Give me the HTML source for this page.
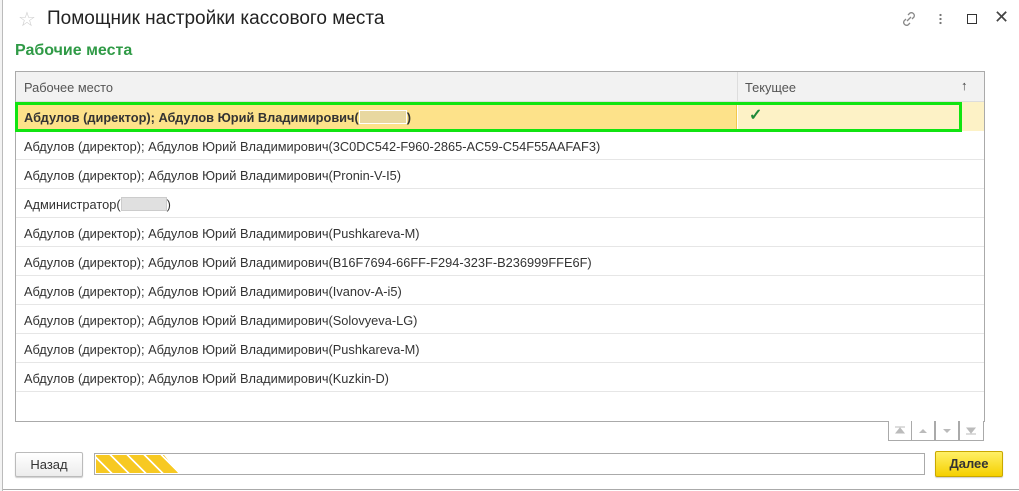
<!DOCTYPE html>
<html><head><meta charset="utf-8"><style>
*{box-sizing:border-box;margin:0;padding:0}
body{width:1019px;height:491px;background:#fff;font-family:"Liberation Sans",Arial,sans-serif;position:relative;overflow:hidden;color:#333}
.abs{position:absolute}
.row{position:absolute;left:16px;width:968px;height:29px;border-bottom:1px solid #e6e6e6;font-size:12.8px;line-height:31px;padding-left:8px;color:#333;white-space:nowrap}
.blur{display:inline-block;width:46px;height:14px;background:#e0e0e0;border:1px solid #ccc;vertical-align:-2px}
.nb{position:absolute;top:421px;width:24px;height:20px;border:1px solid #aaa;border-top:none;background:#fff}
</style></head><body>
<div class="abs" style="left:0;top:0;width:3px;height:491px;background:#f3f3f3;border-right:1px solid #bbb"></div>
<div class="abs" style="left:3px;top:489px;width:1016px;height:1px;background:#aaa"></div>
<div class="abs" style="left:18px;top:7px;font-size:20px;color:#ccc">☆</div>
<div class="abs" style="left:47px;top:8px;font-size:19px;color:#222">Помощник настройки кассового места</div>
<svg class="abs" style="left:900px;top:10px" width="18" height="18" viewBox="0 0 18 18"><g fill="none" stroke="#888" stroke-width="1.3"><path d="M8 5l2-2a3 3 0 0 1 4 4l-2 2"/><path d="M10 13l-2 2a3 3 0 0 1-4-4l2-2"/><path d="M7 11l4-4"/></g></svg>
<div class="abs" style="left:939px;top:13px;width:3px;height:12px;background:radial-gradient(circle,#777 1px,transparent 1.3px) 0 0/3px 4px"></div>
<div class="abs" style="left:967px;top:14px;width:10px;height:10px;border:1.5px solid #333"></div>
<div class="abs" style="left:994px;top:7px;font-size:18px;color:#444">✕</div>
<div class="abs" style="left:15px;top:42px;font-size:16px;font-weight:bold;color:#2f9a46">Рабочие места</div>
<div class="abs" style="left:15px;top:71px;width:970px;height:351px;border:1px solid #aaa"></div>
<div class="abs" style="left:16px;top:72px;width:968px;height:30px;background:#f2f2f2;border-bottom:1px solid #ddd"></div>
<div class="abs" style="left:737px;top:72px;width:1px;height:30px;background:#ddd"></div>
<div class="abs" style="left:24px;top:80px;font-size:12.8px;color:#555">Рабочее место</div>
<div class="abs" style="left:745px;top:80px;font-size:12.8px;color:#555">Текущее</div>
<div class="abs" style="left:961px;top:78px;font-size:13px;color:#444">↑</div>
<div class="abs" style="left:16px;top:102px;width:721px;height:29px;background:#fde28a;border-right:1px solid #f2c94c"></div>
<div class="abs" style="left:738px;top:102px;width:246px;height:29px;background:#fdf2c6"></div>
<div class="abs" style="left:15px;top:102px;width:947px;height:30px;border:3px solid #11e411"></div>
<div class="abs" style="left:24px;top:110px;font-size:12.8px;font-weight:bold;color:#333">Абдулов (директор); Абдулов Юрий Владимирович(<span class="blur" style="width:48px;background:#e8d8a0;border-color:#fff"></span>)</div>
<div class="abs" style="left:749px;top:105px;font-size:16px;color:#1f8a3a;font-weight:bold">✓</div>
<div class="row" style="top:131px">Абдулов (директор); Абдулов Юрий Владимирович(3C0DC542-F960-2865-AC59-C54F55AAFAF3)</div>
<div class="row" style="top:160px">Абдулов (директор); Абдулов Юрий Владимирович(Pronin-V-I5)</div>
<div class="row" style="top:189px">Администратор(<span class="blur"></span>)</div>
<div class="row" style="top:218px">Абдулов (директор); Абдулов Юрий Владимирович(Pushkareva-M)</div>
<div class="row" style="top:247px">Абдулов (директор); Абдулов Юрий Владимирович(B16F7694-66FF-F294-323F-B236999FFE6F)</div>
<div class="row" style="top:276px">Абдулов (директор); Абдулов Юрий Владимирович(Ivanov-A-i5)</div>
<div class="row" style="top:305px">Абдулов (директор); Абдулов Юрий Владимирович(Solovyeva-LG)</div>
<div class="row" style="top:334px">Абдулов (директор); Абдулов Юрий Владимирович(Pushkareva-M)</div>
<div class="row" style="top:363px">Абдулов (директор); Абдулов Юрий Владимирович(Kuzkin-D)</div>
<div class="nb" style="left:888px"><svg width="22" height="19"><path d="M6 6h10M7 12l4-5 4 5z" stroke="#bbb" fill="#bbb"/></svg></div>
<div class="nb" style="left:911px"><svg width="22" height="19"><path d="M7 12l4-4 4 4z" fill="#bbb"/></svg></div>
<div class="nb" style="left:935px"><svg width="22" height="19"><path d="M7 8l4 4 4-4z" fill="#bbb"/></svg></div>
<div class="nb" style="left:959px;width:25px"><svg width="22" height="19"><path d="M6 13h10M7 7l4 5 4-5z" stroke="#bbb" fill="#bbb"/></svg></div>
<div class="abs" style="left:15px;top:452px;width:68px;height:25px;border:1px solid #bbb;border-radius:2px;background:linear-gradient(#fff,#ececec);font-size:13px;line-height:23px;text-align:center;color:#333;box-shadow:0 1px 1px #ccc">Назад</div>
<div class="abs" style="left:94px;top:453px;width:831px;height:22px;border:1px solid #aaa;background:#fff"></div>
<div class="abs" style="left:96px;top:455px;width:82px;height:18px;background:repeating-linear-gradient(45deg,#f7c922 0 10px,#fff 10px 12px);clip-path:polygon(0 0,68px 0,82px 18px,0 18px)"></div>
<div class="abs" style="left:935px;top:451px;width:68px;height:26px;border:1px solid #c9a800;border-radius:2px;background:linear-gradient(#fff066,#f5d000);font-size:13px;font-weight:bold;line-height:24px;text-align:center;color:#333;box-shadow:0 1px 1px #ccc">Далее</div>
</body></html>
